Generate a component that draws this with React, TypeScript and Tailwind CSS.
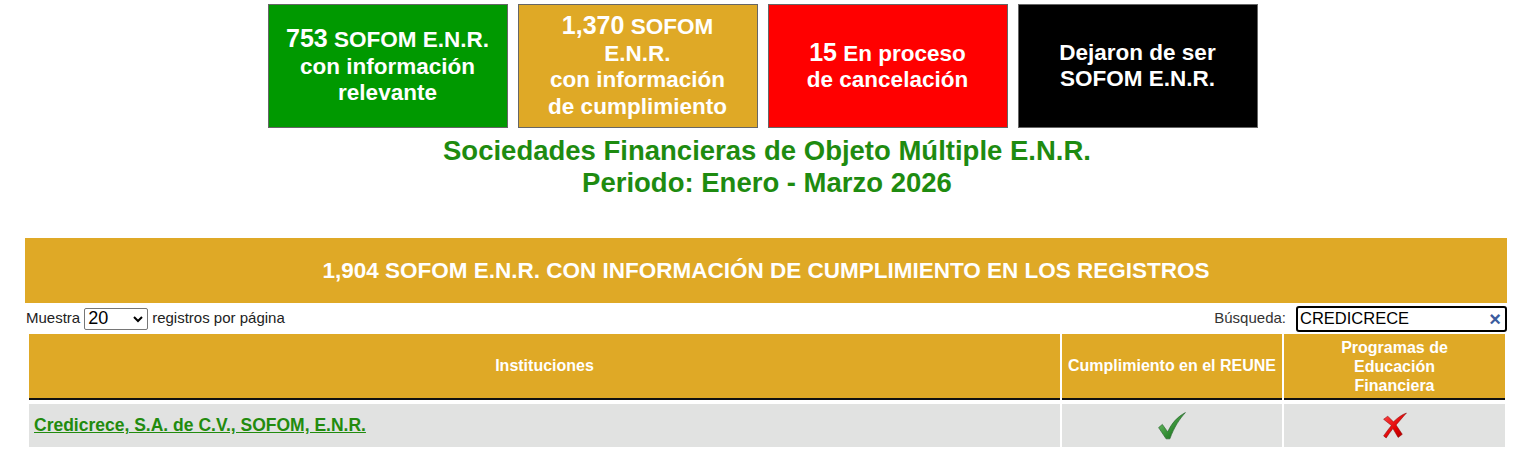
import React from "react";

const BOXES = [
  { bg: "bg-[#009900]", lines: [<><span className="text-[25px]">753</span> SOFOM E.N.R.</>, "con información", "relevante"] },
  { bg: "bg-[#dfa926]", lines: [<><span className="text-[25px]">1,370</span> SOFOM</>, "E.N.R.", "con información", "de cumplimiento"] },
  { bg: "bg-[#ff0000]", lines: [<><span className="text-[25px]">15</span> En proceso</>, "de cancelación"] },
  { bg: "bg-black", lines: ["Dejaron de ser", "SOFOM E.N.R."] },
];

function Check() {
  return (
    <svg width="30" height="30" viewBox="0 0 28 28">
      <defs>
        <linearGradient id="gc" x1="0" y1="0" x2="1" y2="1">
          <stop offset="0" stopColor="#7ccc74" />
          <stop offset="0.6" stopColor="#2f8a30" />
          <stop offset="1" stopColor="#1a5e1e" />
        </linearGradient>
      </defs>
      <path d="M1.5 15.5 L5 12.5 L10 19.5 C14 11 19 5.5 26.5 1.5 C21 7.5 16 15 12 26 L8.5 26 Z" fill="url(#gc)" stroke="#24612a" strokeWidth="0.6" />
    </svg>
  );
}

function Cross() {
  return (
    <svg width="27" height="27" viewBox="0 0 26 26">
      <defs>
        <linearGradient id="gx" x1="0" y1="0" x2="1" y2="1">
          <stop offset="0" stopColor="#ff4a4a" />
          <stop offset="0.6" stopColor="#e00000" />
          <stop offset="1" stopColor="#a00000" />
        </linearGradient>
      </defs>
      <path d="M2.5 7 L6.5 4 L12 9.5 C16 5.5 20 2.5 24.5 1 C21 5 17.5 9 14.5 12.5 L20.5 21.5 L16.5 24.5 L11.5 16 C9 19 7 22 5 25 L2.5 23 C5 19.5 7.5 16 10 13 Z" fill="url(#gx)" stroke="#8a0000" strokeWidth="0.5" />
    </svg>
  );
}

export default function App() {
  return (
    <main className="min-h-screen bg-white text-black" style={{ fontFamily: '"Liberation Sans", Arial, sans-serif' }}>
      <div className="flex justify-center gap-[10px] pt-[4px] pr-[9px]">
        {BOXES.map((b, i) => (
          <div key={i} className={`${b.bg} w-[240px] h-[124px] border border-[#666] flex flex-col items-center justify-center text-white font-bold text-[22.5px] leading-[26.5px] text-center`}>
            {b.lines.map((l, j) => <div key={j}>{l}</div>)}
          </div>
        ))}
      </div>

      <div className="mt-[7px] text-center text-[#1e8b10] font-bold text-[27.5px] leading-[32px]">
        <div>Sociedades Financieras de Objeto Múltiple E.N.R.</div>
        <div>Periodo: Enero - Marzo 2026</div>
      </div>

      <div className="ml-[25px] w-[1482px] mt-[39px]">
        <div className="h-[65px] bg-[#dfa926] flex items-center justify-center text-white font-bold text-[22.5px]">
          1,904 SOFOM E.N.R. CON INFORMACIÓN DE CUMPLIMIENTO EN LOS REGISTROS
        </div>

        <div className="flex items-center justify-between h-[31px] text-[15px] text-[#222]">
          <div className="flex items-center pl-[1px]">
            Muestra
            <div className="mx-[4px] w-[64px] h-[22px] border border-[#767676] rounded-[2px] flex items-center justify-between px-[3px] text-[18px] text-black">
              <span>20</span>
              <svg width="12" height="12" viewBox="0 0 12 12"><path d="M2 4 L6 8 L10 4" fill="none" stroke="#000" strokeWidth="2" /></svg>
            </div>
            registros por página
          </div>
          <div className="flex items-center">
            <span className="mr-[10px] text-[#333]">Búsqueda:</span>
            <div className="w-[211px] h-[26px] border-2 border-black rounded-[3px] flex items-center justify-between pl-[2px] pr-[4px] text-[16.5px] text-black">
              <span>CREDICRECE</span>
              <span className="text-[#3b5c9e] font-bold text-[20px] leading-none">×</span>
            </div>
          </div>
        </div>

        <div className="ml-[4px] w-[1476px] grid grid-cols-[1031px_220px_221px] gap-x-[2px]">
          <div className="h-[66px] bg-[#dfa926] border-b-2 border-[#111] flex items-center justify-center text-white font-bold text-[16px]">Instituciones</div>
          <div className="h-[66px] bg-[#dfa926] border-b-2 border-[#111] flex items-center justify-center text-white font-bold text-[16px]">Cumplimiento en el REUNE</div>
          <div className="h-[66px] bg-[#dfa926] border-b-2 border-[#111] flex flex-col items-center justify-center text-white font-bold text-[16px] leading-[19px] text-center">
            <div>Programas de</div><div>Educación</div><div>Financiera</div>
          </div>

          <div className="mt-[4px] h-[43px] bg-[#e1e2e1] flex items-center pl-[5px]">
            <a href="#" className="text-[#228b0e] font-bold text-[17.5px] underline">Credicrece, S.A. de C.V., SOFOM, E.N.R.</a>
          </div>
          <div className="mt-[4px] h-[43px] bg-[#e1e2e1] flex items-center justify-center"><Check /></div>
          <div className="mt-[4px] h-[43px] bg-[#e1e2e1] flex items-center justify-center"><Cross /></div>
        </div>
      </div>
    </main>
  );
}
